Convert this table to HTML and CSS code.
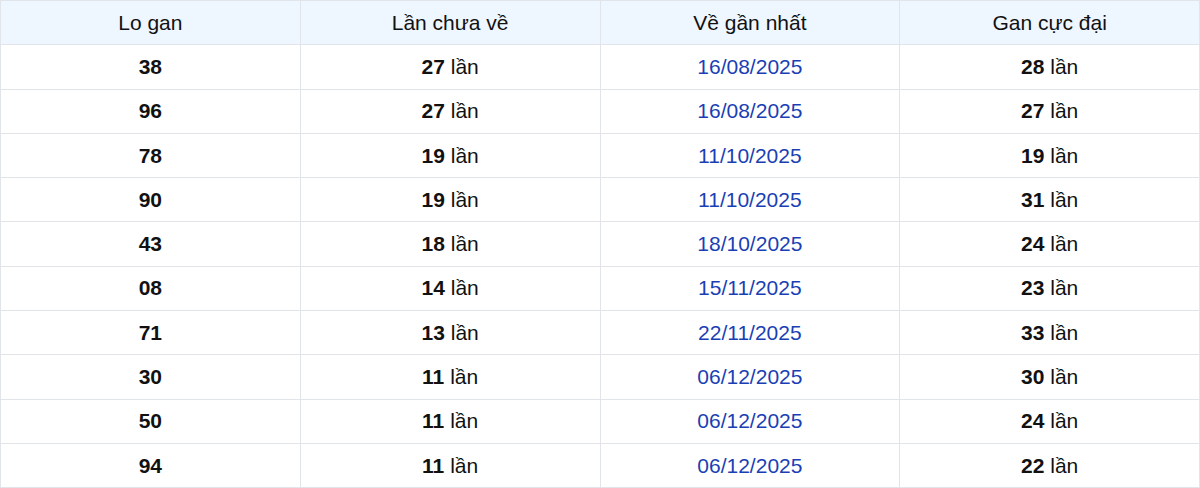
FILE: index.html
```html
<!DOCTYPE html>
<html lang="vi">
<head>
<meta charset="utf-8">
<link rel="stylesheet" href="styles.css">
</head>
<body>
<table class="gan-table">
  <thead>
    <tr><th>Lo gan</th><th>Lần chưa về</th><th>Về gần nhất</th><th>Gan cực đại</th></tr>
  </thead>
  <tbody>
    <tr><td><b>38</b></td><td><b>27</b> lần</td><td class="date">16/08/2025</td><td><b>28</b> lần</td></tr>
    <tr><td><b>96</b></td><td><b>27</b> lần</td><td class="date">16/08/2025</td><td><b>27</b> lần</td></tr>
    <tr><td><b>78</b></td><td><b>19</b> lần</td><td class="date">11/10/2025</td><td><b>19</b> lần</td></tr>
    <tr><td><b>90</b></td><td><b>19</b> lần</td><td class="date">11/10/2025</td><td><b>31</b> lần</td></tr>
    <tr><td><b>43</b></td><td><b>18</b> lần</td><td class="date">18/10/2025</td><td><b>24</b> lần</td></tr>
    <tr><td><b>08</b></td><td><b>14</b> lần</td><td class="date">15/11/2025</td><td><b>23</b> lần</td></tr>
    <tr><td><b>71</b></td><td><b>13</b> lần</td><td class="date">22/11/2025</td><td><b>33</b> lần</td></tr>
    <tr><td><b>30</b></td><td><b>11</b> lần</td><td class="date">06/12/2025</td><td><b>30</b> lần</td></tr>
    <tr><td><b>50</b></td><td><b>11</b> lần</td><td class="date">06/12/2025</td><td><b>24</b> lần</td></tr>
    <tr><td><b>94</b></td><td><b>11</b> lần</td><td class="date">06/12/2025</td><td><b>22</b> lần</td></tr>
  </tbody>
</table>
</body>
</html>
```
FILE: styles.css
```css
html, body {
  margin: 0;
  padding: 0;
  background: #fff;
}
body {
  font-family: "Liberation Sans", Arial, sans-serif;
  color: #111;
}
.gan-table {
  width: 1200px;
  border-collapse: collapse;
  table-layout: fixed;
  font-size: 21px;
}
.gan-table th,
.gan-table td {
  border: 1px solid #e1e4e8;
  text-align: center;
  vertical-align: middle;
  height: 43.3px;
  padding: 0;
  line-height: 24px;
}
.gan-table th {
  background: #eef6ff;
  font-weight: 400;
}
.gan-table b {
  font-weight: 700;
}
.gan-table .date {
  color: #1a3fb4;
}
```
